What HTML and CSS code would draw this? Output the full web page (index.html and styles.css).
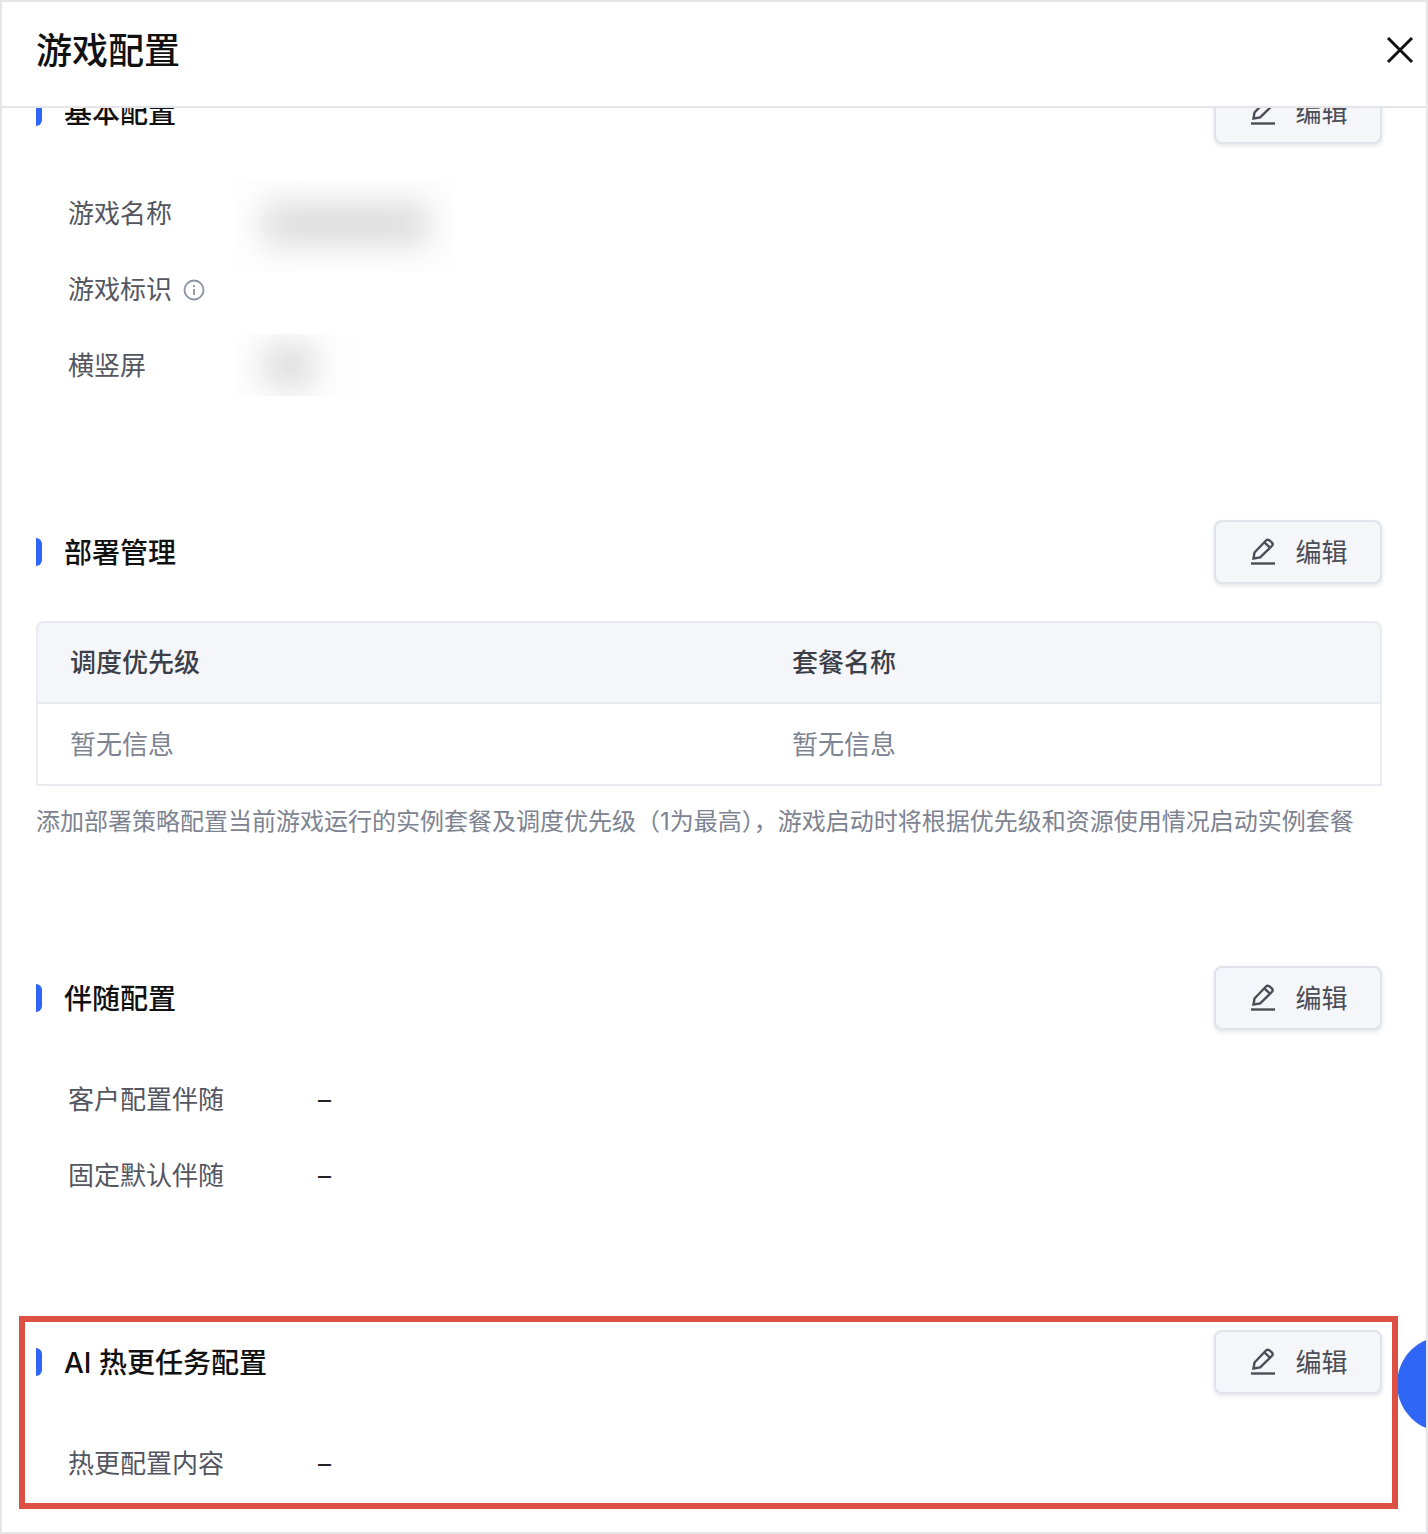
FILE: index.html
```html
<!DOCTYPE html>
<html lang="zh-CN">

<head>
    <meta charset="UTF-8">
    <meta name="viewport" content="width=device-width, initial-scale=1.0">
    <title>游戏配置</title>
    <link rel="stylesheet" href="styles.css">
</head>

<body>
    <div class="panel">
        <header class="panel-header">
            <h1>游戏配置</h1>
            <button class="close-btn" aria-label="关闭">
                <svg width="28" height="28" viewBox="0 0 28 28">
                    <path d="M2 2 L26 26 M26 2 L2 26" fill="none" stroke="#111" stroke-width="3" />
                </svg>
            </button>
        </header>

        <div class="panel-body">
            <section class="section section-clipped">
                <div class="section-head">
                    <h2>基本配置</h2>
                    <button class="edit-btn">
                        <svg class="edit-icon" viewBox="0 0 24 28">
                            <path d="M2.5 21.5 L3.5 15.5 L15 3.5 Q16.5 2 18.2 3.2 L21 5.6 Q22.4 7.2 21 8.8 L9.2 20.4 Z M13.4 5.4 L19.2 10.8" />
                            <path d="M0 26.5 H24" />
                        </svg>
                        <span>编辑</span>
                    </button>
                </div>
                <div class="rows">
                    <div class="row row-narrow">
                        <span class="row-label">游戏名称</span>
                        <div class="mask mask-name"><i class="blob blob-name"></i></div>
                    </div>
                    <div class="row row-narrow">
                        <span class="row-label">游戏标识
                            <svg class="info-icon" viewBox="0 0 22 22">
                                <circle cx="11" cy="11" r="9.5" />
                                <path d="M11 10 V16 M11 6 V8" />
                            </svg>
                        </span>
                    </div>
                    <div class="row row-narrow">
                        <span class="row-label">横竖屏</span>
                        <div class="mask mask-orient"><i class="blob blob-orient"></i></div>
                    </div>
                </div>
            </section>

            <section class="section section-table">
                <div class="section-head">
                    <h2>部署管理</h2>
                    <button class="edit-btn">
                        <svg class="edit-icon" viewBox="0 0 24 28">
                            <path d="M2.5 21.5 L3.5 15.5 L15 3.5 Q16.5 2 18.2 3.2 L21 5.6 Q22.4 7.2 21 8.8 L9.2 20.4 Z M13.4 5.4 L19.2 10.8" />
                            <path d="M0 26.5 H24" />
                        </svg>
                        <span>编辑</span>
                    </button>
                </div>
                <div class="table">
                    <div class="table-row table-head">
                        <span>调度优先级</span>
                        <span>套餐名称</span>
                    </div>
                    <div class="table-row table-empty">
                        <span>暂无信息</span>
                        <span>暂无信息</span>
                    </div>
                </div>
                <p class="note">添加部署策略配置当前游戏运行的实例套餐及调度优先级（1为最高），游戏启动时将根据优先级和资源使用情况启动实例套餐</p>
            </section>

            <section class="section">
                <div class="section-head">
                    <h2>伴随配置</h2>
                    <button class="edit-btn">
                        <svg class="edit-icon" viewBox="0 0 24 28">
                            <path d="M2.5 21.5 L3.5 15.5 L15 3.5 Q16.5 2 18.2 3.2 L21 5.6 Q22.4 7.2 21 8.8 L9.2 20.4 Z M13.4 5.4 L19.2 10.8" />
                            <path d="M0 26.5 H24" />
                        </svg>
                        <span>编辑</span>
                    </button>
                </div>
                <div class="rows">
                    <div class="row">
                        <span class="row-label">客户配置伴随</span>
                        <span class="row-value">–</span>
                    </div>
                    <div class="row">
                        <span class="row-label">固定默认伴随</span>
                        <span class="row-value">–</span>
                    </div>
                </div>
            </section>

            <section class="section">
                <div class="section-head">
                    <h2>AI 热更任务配置</h2>
                    <button class="edit-btn">
                        <svg class="edit-icon" viewBox="0 0 24 28">
                            <path d="M2.5 21.5 L3.5 15.5 L15 3.5 Q16.5 2 18.2 3.2 L21 5.6 Q22.4 7.2 21 8.8 L9.2 20.4 Z M13.4 5.4 L19.2 10.8" />
                            <path d="M0 26.5 H24" />
                        </svg>
                        <span>编辑</span>
                    </button>
                </div>
                <div class="rows">
                    <div class="row">
                        <span class="row-label">热更配置内容</span>
                        <span class="row-value">–</span>
                    </div>
                </div>
            </section>
        </div>

        <div class="float-ball"></div>
        <div class="highlight"></div>
    </div>
</body>

</html>
```

FILE: styles.css
```css
* {
    box-sizing: border-box;
}

body {
    margin: 0;
    background-color: #fff;
    font-family: Inter, "Noto Sans CJK SC", sans-serif;
    color: #111;
}

.panel {
    position: relative;
    display: flex;
    flex-direction: column;
    width: 1428px;
    height: 1534px;
    border: 2px solid #e6e6e9;
    overflow: hidden;
}

.panel-header {
    position: relative;
    z-index: 1;
    display: flex;
    flex: none;
    justify-content: space-between;
    align-items: center;
    height: 106px;
    padding: 0 12px 8px 34px;
    border-bottom: 2px solid #e4e4e9;
    background-color: #fff;
}

.panel-header h1 {
    margin: 0;
    padding-bottom: 4px;
    font-size: 36px;
    font-weight: 500;
}

.close-btn {
    display: flex;
    padding: 0;
    border: none;
    background: none;
}

.panel-body {
    flex: 1;
    padding: 0 44px 0 34px;
    overflow: hidden;
}

.section {
    margin-bottom: 117px;
}

.section-clipped {
    margin-top: -27px;
}

.section-table {
    margin-bottom: 127px;
}

.section-head {
    display: flex;
    justify-content: space-between;
    align-items: center;
    height: 62px;
}

.section-head h2 {
    position: relative;
    margin: 0;
    padding: 0 0 3px 28px;
    font-size: 28px;
    font-weight: 500;
}

.section-head h2::before {
    content: "";
    position: absolute;
    left: 0;
    top: 50%;
    width: 6px;
    height: 28px;
    margin-top: -14px;
    border-radius: 0 6px 6px 0;
    background-color: #2e66fa;
}

.edit-btn {
    display: flex;
    flex: none;
    justify-content: center;
    align-items: center;
    gap: 20px;
    width: 168px;
    height: 64px;
    padding: 0 0 3px 3px;
    border: 2px solid #e0e3eb;
    border-radius: 8px;
    background-color: #f5f6f9;
    box-shadow: 0 2px 4px rgba(30, 40, 70, 0.12);
    font-family: inherit;
    font-size: 26px;
    color: #4b4e57;
}

.edit-icon {
    width: 24px;
    height: 28px;
    fill: none;
    stroke: #4b4e57;
    stroke-width: 2.4;
}

.rows {
    margin-top: 33px;
}

.row {
    display: flex;
    align-items: flex-start;
    height: 76px;
    padding-left: 32px;
    font-size: 26px;
    line-height: 76px;
}

.row-label {
    display: flex;
    flex: none;
    align-items: center;
    gap: 11px;
    width: 250px;
    color: #53565f;
}

.row-narrow .row-label {
    width: 166px;
}

.info-icon {
    width: 22px;
    height: 22px;
    fill: none;
    stroke: #8a92a3;
    stroke-width: 1.8;
}

.row-value {
    color: #222;
}

/* blurred-out values */
.mask {
    overflow: hidden;
    background-color: #fefefe;
}

.mask-name {
    width: 220px;
    height: 92px;
    margin-top: 4px;
    padding: 24px 0 0 30px;
}

.mask-orient {
    width: 124px;
    height: 62px;
    margin-top: 6px;
    padding: 12px 0 0 30px;
}

.blob {
    display: block;
    background-color: #dadada;
    filter: blur(16px);
}

.blob-name {
    width: 164px;
    height: 40px;
}

.blob-orient {
    width: 50px;
    height: 40px;
}

.table {
    margin-top: 38px;
    border: 2px solid #e9ebf0;
    border-radius: 8px 8px 0 0;
}

.table-row {
    display: grid;
    grid-template-columns: 722px 1fr;
    align-items: center;
    height: 80px;
    padding: 0 0 4px 32px;
    font-size: 26px;
}

.table-head {
    height: 81px;
    border-bottom: 2px solid #e9ebf0;
    border-radius: 6px 6px 0 0;
    background-color: #f5f6f9;
    font-weight: 500;
    color: #3c3f47;
}

.table-empty {
    color: #7d8391;
}

.note {
    margin: 18px 0 0;
    font-size: 24px;
    line-height: 36px;
    color: #7d8391;
}

.float-ball {
    position: absolute;
    left: 1395px;
    top: 1334px;
    width: 96px;
    height: 96px;
    border-radius: 50%;
    background-color: #2f66f6;
}

.highlight {
    position: absolute;
    left: 17px;
    top: 1314px;
    width: 1379px;
    height: 193px;
    border: 6px solid #dd5044;
}
```
